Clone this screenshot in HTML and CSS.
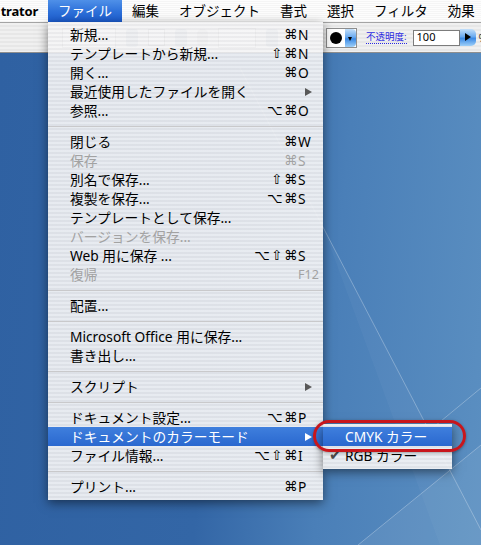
FILE: index.html
```html
<!DOCTYPE html>
<html lang="ja">
<head>
  <meta charset="UTF-8">
  <title>Illustrator - ファイル</title>
  <link rel="stylesheet" href="styles.css">
</head>
<body>
  <!-- Menu bar -->
  <div class="menubar">
    <div class="menubar-item app-name">trator</div>
    <div class="menubar-item open">ファイル
      <!-- File menu (open) -->
      <div class="menu file-menu">
        <div class="menu-item"><span class="label">新規...</span><span class="mods">⌘</span><span class="key">N</span></div>
        <div class="menu-item"><span class="label">テンプレートから新規...</span><span class="mods">⇧⌘</span><span class="key">N</span></div>
        <div class="menu-item"><span class="label">開く...</span><span class="mods">⌘</span><span class="key">O</span></div>
        <div class="menu-item"><span class="label">最近使用したファイルを開く</span><span class="arrow"></span></div>
        <div class="menu-item"><span class="label">参照...</span><span class="mods">⌥⌘</span><span class="key">O</span></div>
        <div class="menu-sep"></div>
        <div class="menu-item"><span class="label">閉じる</span><span class="mods">⌘</span><span class="key">W</span></div>
        <div class="menu-item disabled"><span class="label">保存</span><span class="mods">⌘</span><span class="key">S</span></div>
        <div class="menu-item"><span class="label">別名で保存...</span><span class="mods">⇧⌘</span><span class="key">S</span></div>
        <div class="menu-item"><span class="label">複製を保存...</span><span class="mods">⌥⌘</span><span class="key">S</span></div>
        <div class="menu-item"><span class="label">テンプレートとして保存...</span></div>
        <div class="menu-item disabled"><span class="label">バージョンを保存...</span></div>
        <div class="menu-item"><span class="label">Web 用に保存 ...</span><span class="mods">⌥⇧⌘</span><span class="key">S</span></div>
        <div class="menu-item disabled"><span class="label">復帰</span><span class="key fkey">F12</span></div>
        <div class="menu-sep"></div>
        <div class="menu-item"><span class="label">配置...</span></div>
        <div class="menu-sep"></div>
        <div class="menu-item"><span class="label">Microsoft Office 用に保存...</span></div>
        <div class="menu-item"><span class="label">書き出し...</span></div>
        <div class="menu-sep"></div>
        <div class="menu-item"><span class="label">スクリプト</span><span class="arrow"></span></div>
        <div class="menu-sep"></div>
        <div class="menu-item"><span class="label">ドキュメント設定...</span><span class="mods">⌥⌘</span><span class="key">P</span></div>
        <div class="menu-item selected"><span class="label">ドキュメントのカラーモード</span><span class="arrow"></span>
          <!-- Color mode submenu -->
          <div class="menu submenu">
            <div class="menu-item selected"><span class="label">CMYK カラー</span></div>
            <div class="menu-item"><span class="check">✔</span><span class="label">RGB カラー</span></div>
            <div class="callout"></div>
          </div>
        </div>
        <div class="menu-item"><span class="label">ファイル情報...</span><span class="mods">⌥⇧⌘</span><span class="key">I</span></div>
        <div class="menu-sep"></div>
        <div class="menu-item"><span class="label">プリント...</span><span class="mods">⌘</span><span class="key">P</span></div>
      </div>
    </div>
    <div class="menubar-item">編集</div>
    <div class="menubar-item">オブジェクト</div>
    <div class="menubar-item">書式</div>
    <div class="menubar-item">選択</div>
    <div class="menubar-item">フィルタ</div>
    <div class="menubar-item">効果</div>
  </div>

  <!-- Control palette (left part sits under the open menu) -->
  <div class="toolbar">
    <div class="tb-ghost">
      <span class="g-field"></span>
      <span class="g-drop"></span>
      <span class="g-swatch"></span>
      <span class="g-drop"></span>
      <span class="g-spin"></span>
      <span class="g-field short"></span>
      <span class="g-drop"></span>
    </div>
    <div class="brush-picker"><span class="dot"></span><span class="aqua-drop"></span></div>
    <span class="opacity-label">不透明度:</span>
    <span class="opacity-field">100</span>
    <span class="aqua-step"></span>
    <span class="pct">%</span>
  </div>

  <!-- Desktop -->
  <div class="desktop">
    <svg class="wallpaper" viewBox="0 53 481 492" preserveAspectRatio="none">
      <polygon points="481,445 358,545 481,545" fill="#ffffff" fill-opacity="0.07"/>
      <polygon points="323,227 481,530 481,545 440,545" fill="#ffffff" fill-opacity="0.03"/>
      <g stroke="#ffffff" stroke-opacity="0.28" stroke-width="1" fill="none">
        <path d="M240 68 L481 530"/>
        <path d="M481 388 L418 440"/>
        <path d="M481 445 L358 545"/>
      </g>
    </svg>
  </div>
</body>
</html>
```

FILE: styles.css
```css
html, body {
  margin: 0;
  padding: 0;
}

body {
  width: 481px;
  height: 545px;
  overflow: hidden;
  display: flex;
  flex-direction: column;
  font-family: "Noto Sans", "Noto Sans CJK JP", sans-serif;
  background-color: #3165a5;
}

/* Menu bar */

.menubar {
  height: 22px;
  flex: none;
  display: flex;
  position: relative;
  z-index: 5;
  background: repeating-linear-gradient(#fdfdfd 0 1px, #f5f5f5 1px 2px);
  font-size: 13.5px;
  line-height: 22px;
  color: #000;
  white-space: nowrap;
}

.menubar-item {
  flex: none;
  display: flex;
  align-items: center;
  padding: 0 10px;
}

.menubar-item.app-name {
  width: 48px;
  box-sizing: border-box;
  padding: 0 10px 0 0;
  justify-content: flex-end;
  font-size: 13px;
  font-weight: bold;
  letter-spacing: -0.2px;
}

.menubar-item.open {
  position: relative;
  color: #fff;
  background: linear-gradient(#4f90e8, #2f72da 50%, #1b5bcd);
}

/* Menus */

.menu {
  position: absolute;
  top: 100%;
  left: 0;
  z-index: 10;
  padding: 3px 0 4px;
  background: repeating-linear-gradient(rgba(245, 245, 246, 0.93) 0 2px, rgba(234, 234, 236, 0.93) 2px 4px);
  box-shadow: 0 3px 10px rgba(0, 0, 0, 0.5);
  color: #000;
  font-size: 13.75px;
  font-weight: normal;
  letter-spacing: 0;
  line-height: 19px;
  white-space: nowrap;
}

.file-menu {
  width: 275px;
}

.menu-item {
  position: relative;
  display: grid;
  grid-template-columns: 1fr auto 22px;
  align-items: center;
  height: 19px;
  padding: 0 3px 0 22px;
}

.menu-item .label {
  grid-column: 1;
}

.menu-item .mods {
  grid-column: 2;
  font-family: "DejaVu Sans", sans-serif;
  font-size: 13.5px;
  letter-spacing: 1.5px;
  margin-right: -1px;
  text-align: right;
}

.menu-item .key {
  grid-column: 3;
}

.menu-item .fkey {
  font-size: 12.5px;
}

.menu-item .arrow {
  grid-column: 3;
  justify-self: start;
  width: 0;
  height: 0;
  margin-left: 7px;
  border-left: 7px solid #585858;
  border-top: 4px solid transparent;
  border-bottom: 4px solid transparent;
}

.menu-item.disabled {
  color: #a2a2a2;
}

.menu-item.selected {
  color: #fff;
  background: linear-gradient(#3f7fdd, #2a68cf);
}

.menu-item.selected > .arrow {
  border-left-color: #fff;
}

.menu-sep {
  height: 12px;
  display: flex;
  align-items: center;
}

.menu-sep::before {
  content: "";
  flex: 1;
  height: 1px;
  background-color: #c9c9cb;
}

.submenu {
  left: 100%;
  top: -3px;
  width: 129px;
}

.submenu .menu-item {
  grid-template-columns: 1fr;
}

.submenu .check {
  position: absolute;
  left: 6px;
  font-family: "DejaVu Sans", sans-serif;
  font-size: 15px;
  color: #4a4a4a;
}

.callout {
  position: absolute;
  left: -10px;
  top: -4px;
  width: 153px;
  height: 32px;
  box-sizing: border-box;
  border: 3px solid #c8161c;
  border-radius: 16px;
  box-shadow: 0 1px 3px rgba(0, 0, 0, 0.35);
}

/* Control palette */

.toolbar {
  height: 29px;
  flex: none;
  display: flex;
  align-items: center;
  padding-left: 62px;
  border-top: 1px solid #a4a4a4;
  border-bottom: 1px solid #8e8e8e;
  background: repeating-linear-gradient(#f0f0f0 0 2px, #e7e7e7 2px 4px);
  font-size: 11px;
  white-space: nowrap;
}

.tb-ghost {
  flex: 0 0 264px;
  display: flex;
  align-items: center;
  gap: 10px;
}

.g-field {
  width: 52px;
  height: 18px;
  border: 1px solid #999;
  background-color: #fff;
}

.g-field.short {
  width: 36px;
}

.g-drop {
  width: 12px;
  height: 18px;
  border-radius: 3px;
  background-color: #9ab;
}

.g-swatch {
  width: 15px;
  height: 15px;
  border: 1px solid #888;
  background-color: #fff;
}

.g-spin {
  width: 11px;
  height: 18px;
  border-radius: 5px;
  background-color: #bbb;
}

.brush-picker {
  width: 31px;
  height: 20px;
  flex: none;
  box-sizing: border-box;
  display: flex;
  align-items: center;
  border: 1px solid #8d8d8d;
  background-color: #fff;
}

.dot {
  width: 12px;
  height: 12px;
  margin-left: 3px;
  border-radius: 50%;
  background-color: #000;
}

.aqua-drop,
.aqua-step {
  position: relative;
  flex: none;
  background: linear-gradient(#c4e0fa, #6aaaf0 45%, #3b8ae6 55%, #9fd0f8);
}

.aqua-drop {
  margin-left: auto;
  width: 11px;
  height: 18px;
  border-radius: 0 4px 4px 0;
}

.aqua-drop::after {
  content: "";
  position: absolute;
  left: 3px;
  top: 8px;
  border-top: 4px solid #000;
  border-left: 2.5px solid transparent;
  border-right: 2.5px solid transparent;
}

.opacity-label {
  margin-left: 9px;
  font-size: 9.5px;
  line-height: 12px;
  color: #2a2ae0;
  border-bottom: 1px dotted #2a2ae0;
}

.opacity-field {
  width: 47px;
  height: 16px;
  flex: none;
  box-sizing: border-box;
  margin-left: 6px;
  padding-left: 3px;
  border: 1px solid #7c7c7c;
  background-color: #fff;
  font-size: 11px;
  line-height: 12px;
}

.aqua-step {
  width: 16px;
  height: 17px;
  border-radius: 0 5px 5px 0;
}

.aqua-step::after {
  content: "";
  position: absolute;
  left: 5px;
  top: 4px;
  border-left: 6px solid #000;
  border-top: 4px solid transparent;
  border-bottom: 4px solid transparent;
}

.pct {
  margin-left: 3px;
  font-size: 10px;
  color: #333;
}

/* Desktop */

.desktop {
  flex: 1;
  background: linear-gradient(95deg, #2f61a2 0%, #3366a6 45%, #4a7fb8 68%, #5b8fc1 100%);
}

.wallpaper {
  display: block;
  width: 100%;
  height: 100%;
}
```
